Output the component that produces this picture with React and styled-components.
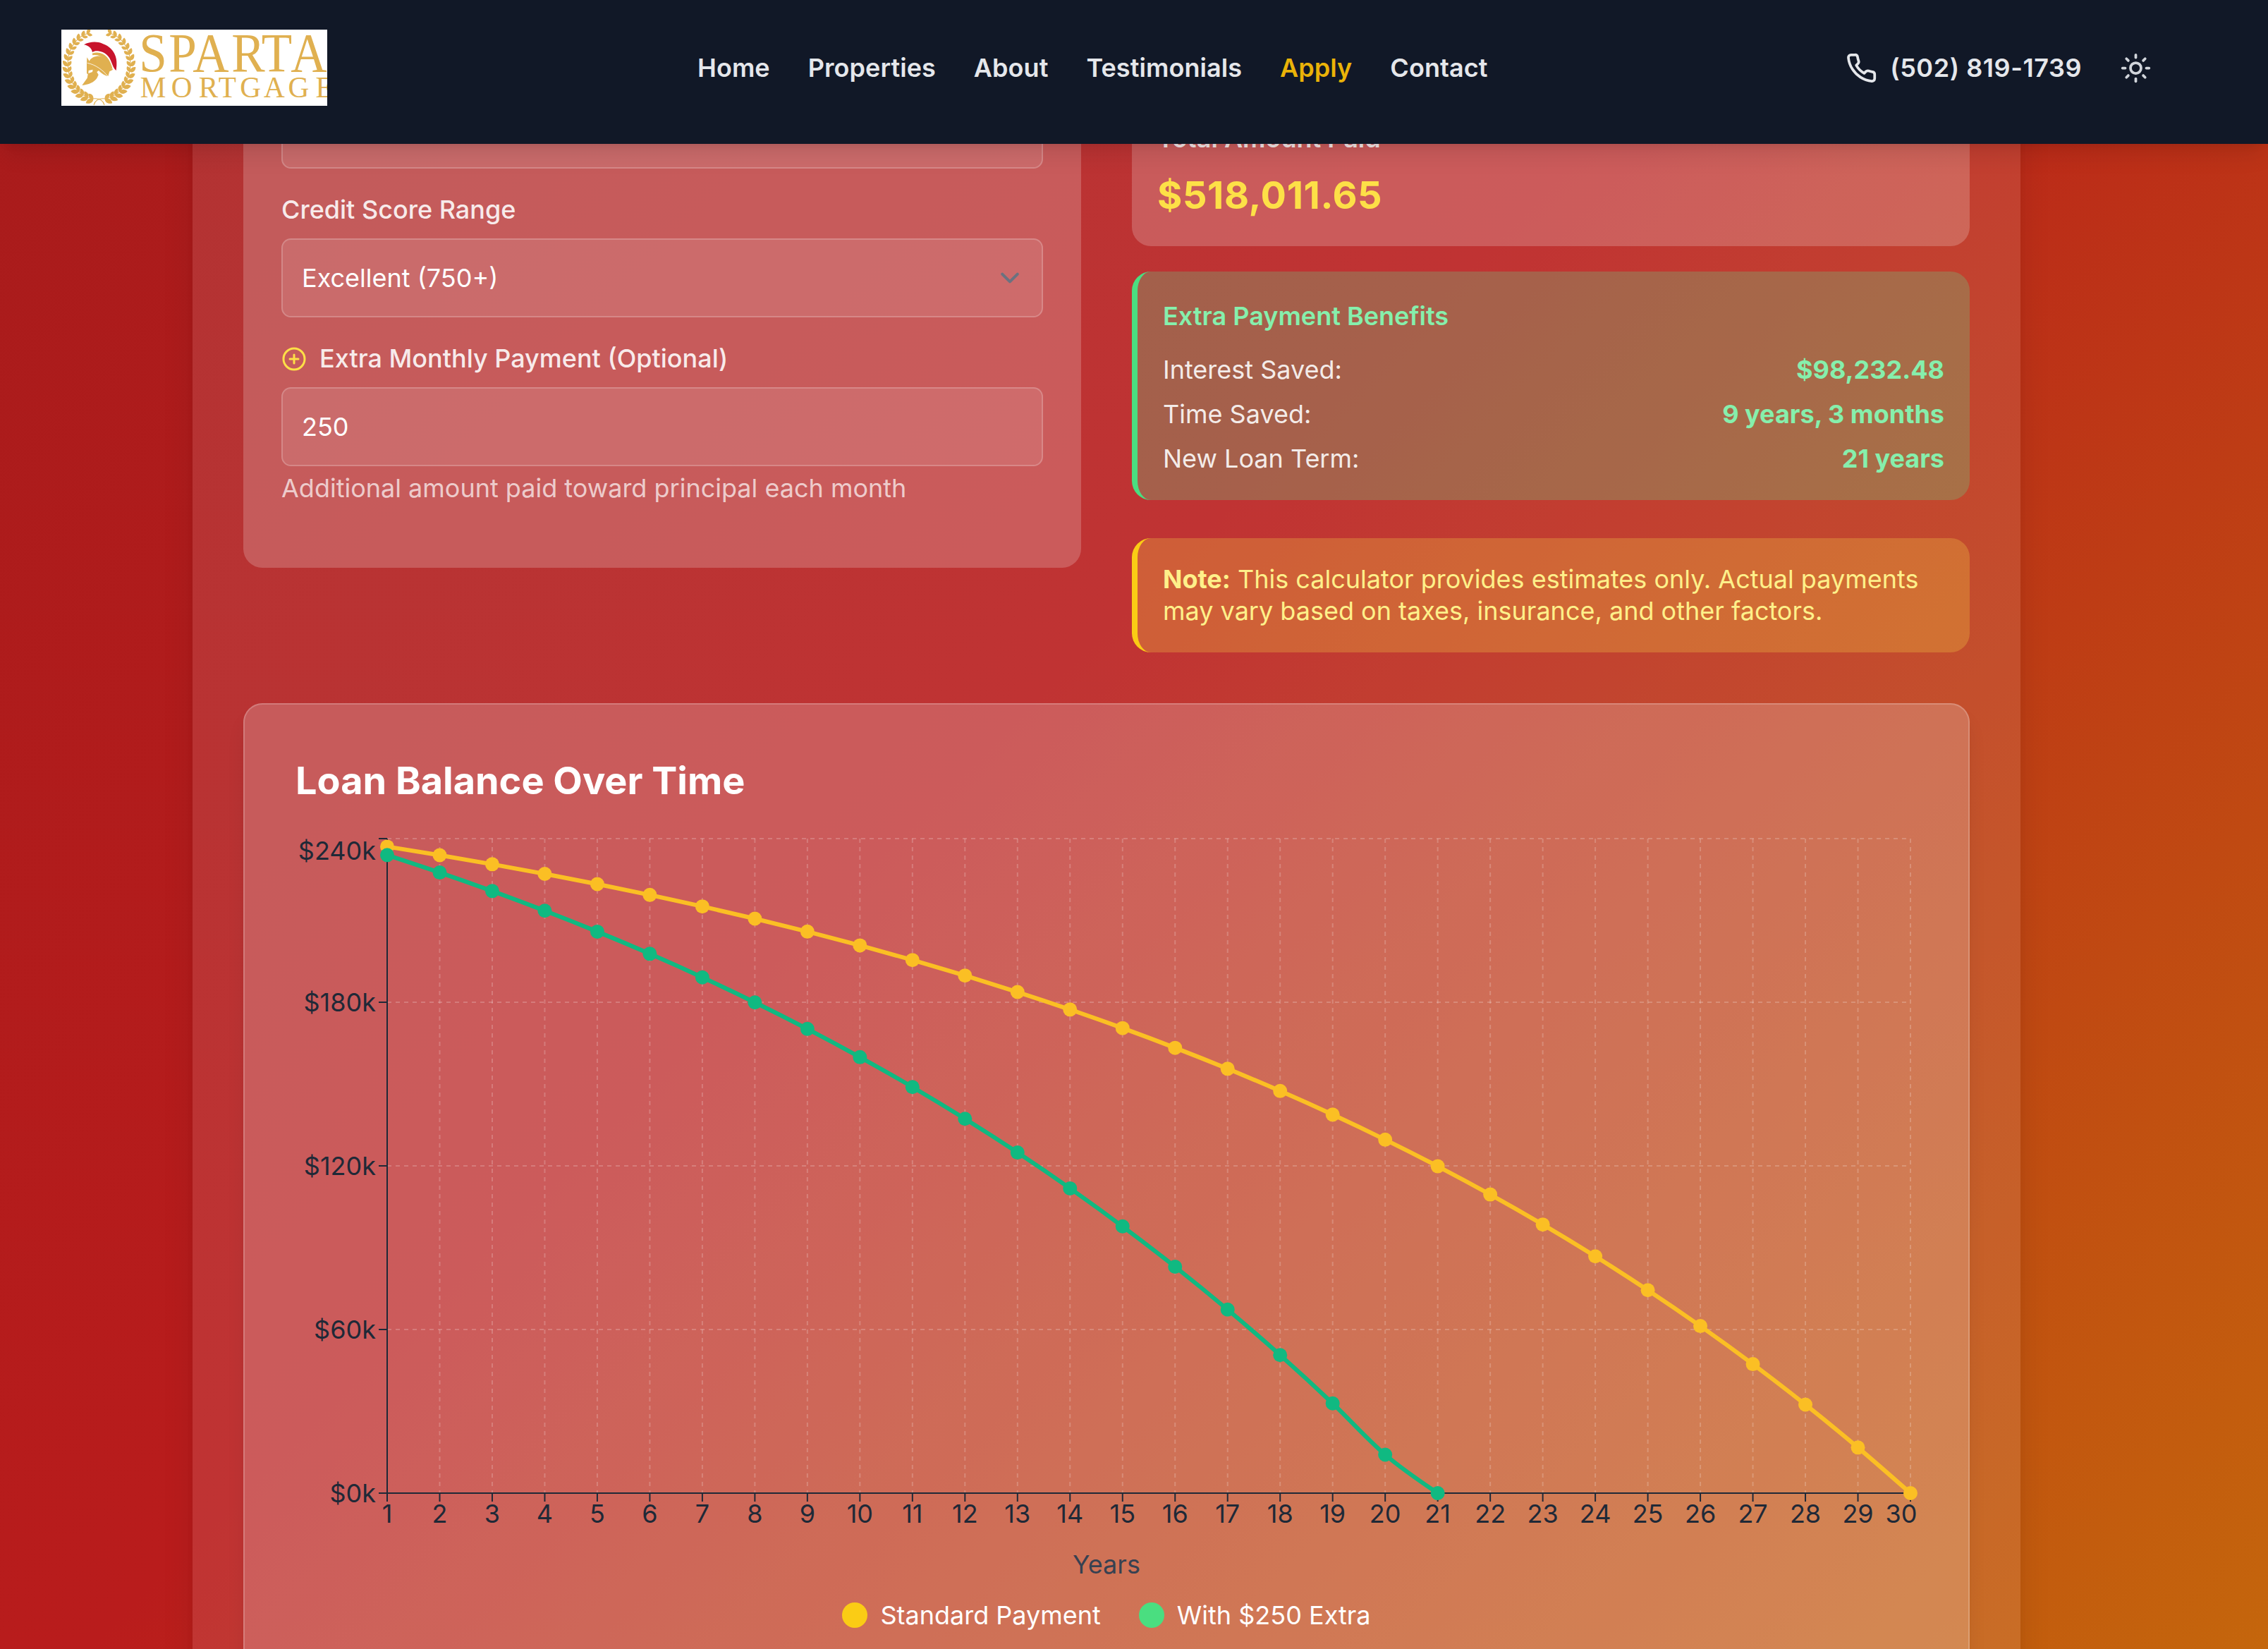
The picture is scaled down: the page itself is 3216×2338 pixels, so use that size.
import React from "react";
import styled, { createGlobalStyle } from "styled-components";
import { CirclePlus, Sun } from "lucide-react";

const GlobalStyle = createGlobalStyle`
  *, *::before, *::after { box-sizing: border-box; }
  html, body { margin: 0; padding: 0; }
  body {
    font-family: Inter, "Liberation Sans", sans-serif;
    font-size: 36px;
    line-height: 54px;
    color: #fff;
    -webkit-font-smoothing: antialiased;
  }
`;

const Page = styled.div`
  width: 3216px;
  height: 2338px;
  display: flex;
  flex-direction: column;
  overflow: hidden;
  background-image: linear-gradient(135deg, #991b1b, #b91c1c 50%, #ca8a04);
  background-size: 3216px 5984px;
  background-position: 0 -2140px;
`;

const Header = styled.header`
  position: relative;
  z-index: 2;
  flex: none;
  height: 204px;
  padding: 42px 165px 54px 87px;
  display: flex;
  align-items: center;
  background: #111827;
  color: #e5e7eb;
  box-shadow: 0 20px 30px -6px rgba(0, 0, 0, 0.1), 0 8px 12px -8px rgba(0, 0, 0, 0.1);
`;

const LogoImage = styled.svg`
  display: block;
  flex: none;
  background: #fff;
`;

const Nav = styled.nav`
  display: flex;
  gap: 54px;
  margin-left: 525px;
`;

const NavLink = styled.a`
  font-weight: 600;
  letter-spacing: 0.06px;
  color: ${(p) => (p.$active ? "#eab308" : "#e5e7eb")};
`;

const HeaderActions = styled.div`
  display: flex;
  align-items: center;
  margin-left: auto;
  gap: 54px;
`;

const PhoneLink = styled.a`
  display: flex;
  align-items: center;
  gap: 18px;
  font-weight: 600;
  letter-spacing: 0.55px;
`;

const ThemeToggle = styled.button`
  display: flex;
  padding: 0;
  border: 0;
  background: none;
  color: #d1d5db;
`;

const Main = styled.main`
  flex: 1;
  min-height: 0;
  overflow: hidden;
`;

const Calculator = styled.section`
  width: 2592px;
  height: 2900px;
  margin: -335px 0 0 273px;
  padding: 300px 72px 0;
  background: rgba(255, 255, 255, 0.1);
  box-shadow: 0 40px 50px -10px rgba(0, 0, 0, 0.14), 0 16px 20px -12px rgba(0, 0, 0, 0.1);
`;

const Columns = styled.div`
  display: grid;
  grid-template-columns: 1fr 1fr;
  gap: 72px;
  align-items: start;
`;

const FormCard = styled.div`
  display: flex;
  flex-direction: column;
  gap: 36px;
  padding: 0 54px 90px;
  border-radius: 0 0 27px 27px;
  background: rgba(255, 255, 255, 0.2);
`;

const ClippedField = styled.div`
  height: 70px;
  border: 2px solid rgba(255, 255, 255, 0.2);
  border-radius: 0 0 13.5px 13.5px;
  background: rgba(255, 255, 255, 0.1);
`;

const Field = styled.div`
  display: flex;
  flex-direction: column;
`;

const Label = styled.label`
  display: flex;
  align-items: center;
  gap: 18px;
  height: 45px;
  margin-bottom: 18px;
  line-height: 45px;
  font-weight: 500;
  color: rgba(255, 255, 255, 0.9);

  svg { color: #fde047; }
`;

const Control = styled.div`
  display: flex;
  align-items: center;
  justify-content: space-between;
  height: 112px;
  padding: 0 18px 0 27px;
  border: 2px solid rgba(255, 255, 255, 0.2);
  border-radius: 13.5px;
  background: rgba(255, 255, 255, 0.1);
`;

const Hint = styled.p`
  margin: 9px 0 0;
  line-height: 45px;
  color: rgba(255, 255, 255, 0.7);
`;

const Results = styled.div`
  display: flex;
  flex-direction: column;
`;

const TotalCard = styled.div`
  padding: 0 36px 36px;
  border-radius: 0 0 27px 27px;
  background: rgba(255, 255, 255, 0.2);
`;

const TotalLabel = styled.div`
  margin-bottom: 18px;
  font-weight: 600;
  color: rgba(255, 255, 255, 0.9);
`;

const TotalValue = styled.div`
  font-size: 54px;
  line-height: 72px;
  font-weight: 700;
  letter-spacing: 0.6px;
  color: #fde047;
`;

const Callout = styled.div`
  margin-top: ${(p) => p.$gap}px;
  padding: 36px;
  border-left: 8px solid ${(p) => p.$accent};
  border-radius: 27px;
  background: ${(p) => p.$fill};
  color: ${(p) => p.$color};
  line-height: 45px;
`;

const BenefitsTitle = styled.h4`
  margin: 0 0 27px;
  font-size: 36px;
  line-height: 54px;
  font-weight: 600;
  color: #86efac;
`;

const BenefitRow = styled.div`
  display: flex;
  justify-content: space-between;
  color: rgba(255, 255, 255, 0.9);

  & + & { margin-top: 18px; }

  strong {
    font-weight: 700;
    color: #86efac;
  }
`;

const ChartCard = styled.div`
  height: 1500px;
  margin-top: 72px;
  padding: 72px;
  border: 2px solid rgba(255, 255, 255, 0.2);
  border-radius: 27px;
  background: rgba(255, 255, 255, 0.2);
  box-shadow: 0 20px 30px -6px rgba(0, 0, 0, 0.1), 0 8px 12px -8px rgba(0, 0, 0, 0.1);
`;

const ChartTitle = styled.h3`
  margin: 0 0 36px;
  font-size: 54px;
  line-height: 72px;
  font-weight: 700;
`;

const ChartSvg = styled.svg`
  display: block;
  overflow: visible;

  text {
    font-size: 36px;
    fill: #1f2937;
  }
  .caption { fill: #374151; }
`;

const Legend = styled.div`
  display: flex;
  justify-content: center;
  gap: 54px;
  margin-top: 17px;
`;

const LegendItem = styled.div`
  display: flex;
  align-items: center;
  gap: 18px;
`;

const Swatch = styled.span`
  width: 36px;
  height: 36px;
  border-radius: 50%;
  background: ${(p) => p.$color};
`;

const GOLD = "#e0b050";

// Leaves follow an ellipse from the bottom knot up to the open top.
function wreathLeaves() {
  const leaves = [];
  const count = 16;
  for (let i = 0; i < count; i += 1) {
    const deg = 100 + (i * 148) / (count - 1);
    const a = (deg * Math.PI) / 180;
    const x = 53 + 44 * Math.cos(a);
    const y = 51 + 48 * Math.sin(a);
    const heading = (Math.atan2(48 * Math.cos(a), -44 * Math.sin(a)) * 180) / Math.PI;
    const size = 1.12 - i * 0.018;
    leaves.push([x, y, heading - 36, size], [x, y, heading + 40, size * 0.85]);
  }
  return leaves;
}

const LEAVES = wreathLeaves();

function WreathHalf({ flip }) {
  return (
    <g transform={flip ? "translate(107 0) scale(-1 1)" : undefined}>
      <path d="M61 107 C59 99 52 97 44 98 C4 90 -6 20 38 5" fill="none" stroke={GOLD} strokeWidth="1.1" />
      {LEAVES.map(([x, y, r, s], i) => (
        <path
          key={i}
          d="M0 0 C2 -4.2 7 -4.4 10.8 -0.8 C8 3.3 3 3.4 0 0Z"
          fill={GOLD}
          transform={`translate(${x.toFixed(2)} ${y.toFixed(2)}) rotate(${r.toFixed(1)}) scale(${s.toFixed(2)})`}
        />
      ))}
    </g>
  );
}

const Wordmark = styled.text`
  font-family: "Liberation Serif", serif;
  font-size: ${(p) => p.$size}px;
  font-kerning: none;
  text-anchor: middle;
  fill: ${GOLD};
`;

const centers = (xs, scale) => xs.map((c) => (c / scale).toFixed(1)).join(" ");

function Logo() {
  return (
    <LogoImage width="377" height="108" viewBox="0 0 377 108">
      <WreathHalf />
      <WreathHalf flip />
      <g transform="translate(-3 -2) scale(0.3333)">
        <path
          d="M105 70 C130 57 160 55 185 66 C225 80 248 115 244 160 L242 180 C232 172 228 160 222 145 C214 120 195 100 165 97 C155 96 147 98 141 102 C138 85 125 74 105 70Z"
          fill="#c8142c"
        />
        <path d="M140 107 C185 93 216 125 227 174 L216 170 C205 135 180 110 142 115Z" fill={GOLD} />
        <path
          d="M118 124 L128 140 C135 125 155 117 175 119 C200 124 216 145 221 172 L229 176 L214 184 L208 204 C195 202 178 192 168 180 L160 186 L167 198 L160 213 C148 230 125 240 97 243 L119 212 L122 196 L117 192 L117 150Z"
          fill={GOLD}
        />
        <path d="M125 180 L143 176 L141 186 L124 192Z" fill="#fff" />
        <path d="M119 148 C155 155 185 178 207 204" fill="none" stroke="#fff" strokeWidth="2.5" />
      </g>
      <Wordmark $size={79} y="59" transform="scale(0.9 1)" x={centers([130, 172, 212, 265, 305.5, 351], 0.9)}>SPARTA</Wordmark>
      <Wordmark $size={42} y="96.5" transform="scale(0.98 1)" x={centers([130, 170.5, 208.5, 235.3, 268, 301.8, 336.3, 373], 0.98)}>MORTGAGE</Wordmark>
    </LogoImage>
  );
}

function PhoneIcon() {
  return (
    <svg width="45" height="45" viewBox="0 0 24 24" fill="none" stroke="currentColor" strokeWidth="2" strokeLinecap="round" strokeLinejoin="round">
      <path d="M22 16.92v3a2 2 0 0 1-2.18 2 19.79 19.79 0 0 1-8.63-3.07 19.5 19.5 0 0 1-6-6 19.79 19.79 0 0 1-3.07-8.67A2 2 0 0 1 4.11 2h3a2 2 0 0 1 2 1.72 12.84 12.84 0 0 0 .7 2.81 2 2 0 0 1-.45 2.11L8.09 9.91a16 16 0 0 0 6 6l1.27-1.27a2 2 0 0 1 2.11-.45 12.84 12.84 0 0 0 2.81.7A2 2 0 0 1 22 16.92z" />
    </svg>
  );
}

function SelectChevron() {
  return (
    <svg width="54" height="54" viewBox="0 0 20 20" fill="none" stroke="#6b7280" strokeWidth="1.5" strokeLinecap="round" strokeLinejoin="round">
      <path d="M6 8l4 4 4-4" />
    </svg>
  );
}

const LOAN = 240000;
const MONTHLY_RATE = 0.06 / 12;
const PAYMENT = (LOAN * MONTHLY_RATE) / (1 - Math.pow(1 + MONTHLY_RATE, -360));

function yearlyBalances(extra, years) {
  const out = [];
  let balance = LOAN;
  for (let m = 1; m <= years * 12; m += 1) {
    balance = Math.max(0, balance * (1 + MONTHLY_RATE) - PAYMENT - extra);
    if (m % 12 === 0) out.push(balance);
  }
  return out;
}

const PLOT = { left: 130, right: 2290, top: 10, bottom: 938 };
const STEP = (PLOT.right - PLOT.left) / 29;
const xAt = (year) => PLOT.left + (year - 1) * STEP;
const yAt = (v) => PLOT.bottom - (v / LOAN) * (PLOT.bottom - PLOT.top);

// Monotone cubic interpolation for evenly spaced points.
function monotonePath(pts) {
  const n = pts.length;
  const slopes = pts.slice(1).map((p, i) => (p[1] - pts[i][1]) / STEP);
  const tangents = pts.map((_, i) => {
    if (i === 0 || i === n - 1) return null;
    const a = slopes[i - 1];
    const b = slopes[i];
    return (Math.sign(a) + Math.sign(b)) * Math.min(Math.abs(a), Math.abs(b), Math.abs(a + b) / 4) || 0;
  });
  tangents[0] = (3 * slopes[0] - tangents[1]) / 2;
  tangents[n - 1] = (3 * slopes[n - 2] - tangents[n - 2]) / 2;
  const h = STEP / 3;
  return pts.reduce((d, [x, y], i) => {
    if (i === 0) return `M${x} ${y}`;
    const [px, py] = pts[i - 1];
    return `${d}C${px + h} ${py + h * tangents[i - 1]} ${x - h} ${y - h * tangents[i]} ${x} ${y}`;
  }, "");
}

function Series({ values, color }) {
  const pts = values.map((v, i) => [xAt(i + 1), yAt(v)]);
  return (
    <g>
      <path d={monotonePath(pts)} fill="none" stroke={color} strokeWidth="6" />
      {pts.map(([x, y]) => (
        <circle key={x} cx={x} cy={y} r="10" fill={color} />
      ))}
    </g>
  );
}

const YEARS = Array.from({ length: 30 }, (_, i) => i + 1);
const Y_TICKS = [0, 60, 120, 180, 240];

function BalanceChart() {
  return (
    <ChartSvg width="2300" height="1067" viewBox="0 0 2300 1067">
      <g stroke="rgba(255,255,255,0.2)" strokeWidth="2" strokeDasharray="6 6">
        {Y_TICKS.map((t) => (
          <line key={t} x1={PLOT.left} x2={PLOT.right} y1={yAt(t * 1000)} y2={yAt(t * 1000)} />
        ))}
        {YEARS.map((y) => (
          <line key={y} x1={xAt(y)} x2={xAt(y)} y1={PLOT.top} y2={PLOT.bottom} />
        ))}
      </g>
      <g stroke="#1f2937" strokeWidth="2">
        <line x1={PLOT.left} x2={PLOT.left} y1={PLOT.top} y2={PLOT.bottom} />
        <line x1={PLOT.left} x2={PLOT.right} y1={PLOT.bottom} y2={PLOT.bottom} />
        {Y_TICKS.map((t) => (
          <line key={t} x1={PLOT.left - 12} x2={PLOT.left} y1={yAt(t * 1000)} y2={yAt(t * 1000)} />
        ))}
        {YEARS.map((y) => (
          <line key={y} x1={xAt(y)} x2={xAt(y)} y1={PLOT.bottom} y2={PLOT.bottom + 12} />
        ))}
      </g>
      {Y_TICKS.map((t) => (
        <text key={t} x={PLOT.left - 16} y={t === 240 ? 40 : yAt(t * 1000) + 13} textAnchor="end">{`$${t}k`}</text>
      ))}
      {YEARS.map((y) => (
        <text key={y} x={y === 30 ? 2277 : xAt(y)} y={980} textAnchor="middle">{y}</text>
      ))}
      <text className="caption" x="1150" y="1052" textAnchor="middle">Years</text>
      <Series values={yearlyBalances(0, 30)} color="#fbbf24" />
      <Series values={yearlyBalances(250, 21)} color="#10b981" />
    </ChartSvg>
  );
}

const LINKS = ["Home", "Properties", "About", "Testimonials", "Apply", "Contact"];

export default function App() {
  return (
    <>
      <GlobalStyle />
      <Page>
        <Header>
          <Logo />
          <Nav>
            {LINKS.map((l) => (
              <NavLink key={l} $active={l === "Apply"}>{l}</NavLink>
            ))}
          </Nav>
          <HeaderActions>
            <PhoneLink><PhoneIcon />(502) 819-1739</PhoneLink>
            <ThemeToggle aria-label="Toggle theme"><Sun size={45} /></ThemeToggle>
          </HeaderActions>
        </Header>
        <Main>
          <Calculator>
            <Columns>
              <FormCard>
                <ClippedField />
                <Field>
                  <Label>Credit Score Range</Label>
                  <Control>Excellent (750+)<SelectChevron /></Control>
                </Field>
                <Field>
                  <Label><CirclePlus size={36} />Extra Monthly Payment (Optional)</Label>
                  <Control>250</Control>
                  <Hint>Additional amount paid toward principal each month</Hint>
                </Field>
              </FormCard>
              <Results>
                <TotalCard>
                  <TotalLabel>Total Amount Paid</TotalLabel>
                  <TotalValue>$518,011.65</TotalValue>
                </TotalCard>
                <Callout $gap={36} $accent="#4ade80" $fill="rgba(86, 230, 148, 0.25)">
                  <BenefitsTitle>Extra Payment Benefits</BenefitsTitle>
                  <BenefitRow><span>Interest Saved:</span><strong>$98,232.48</strong></BenefitRow>
                  <BenefitRow><span>Time Saved:</span><strong>9 years, 3 months</strong></BenefitRow>
                  <BenefitRow><span>New Loan Term:</span><strong>21 years</strong></BenefitRow>
                </Callout>
                <Callout $gap={54} $accent="#facc15" $fill="rgba(253, 224, 71, 0.25)" $color="#fef08a">
                  <strong>Note:</strong> This calculator provides estimates only. Actual payments may vary based on taxes, insurance, and other factors.
                </Callout>
              </Results>
            </Columns>
            <ChartCard>
              <ChartTitle>Loan Balance Over Time</ChartTitle>
              <BalanceChart />
              <Legend>
                <LegendItem><Swatch $color="#facc15" />Standard Payment</LegendItem>
                <LegendItem><Swatch $color="#4ade80" />With $250 Extra</LegendItem>
              </Legend>
            </ChartCard>
          </Calculator>
        </Main>
      </Page>
    </>
  );
}
